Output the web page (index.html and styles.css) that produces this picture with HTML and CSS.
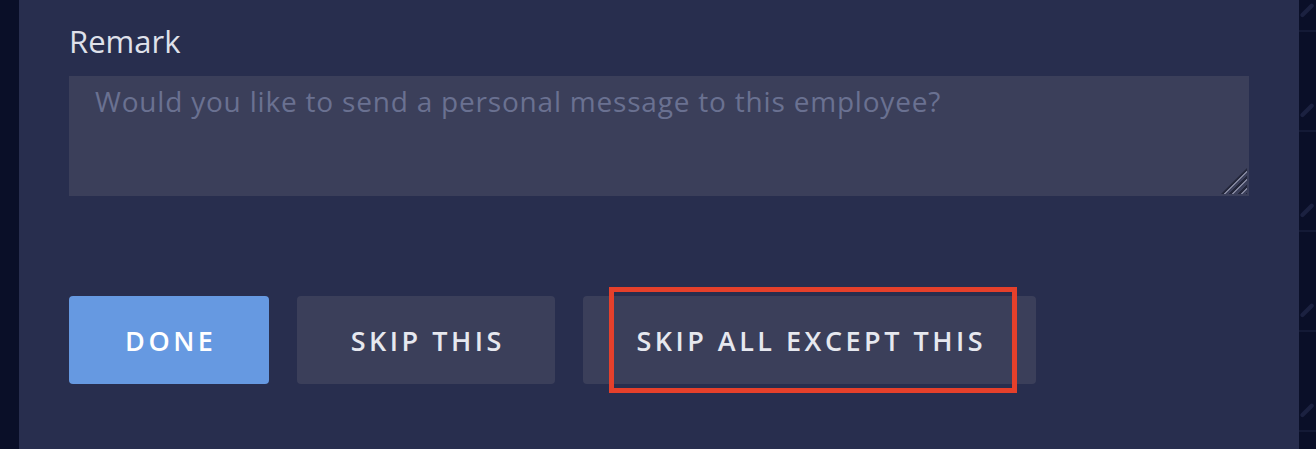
FILE: index.html
```html
<!DOCTYPE html>
<html lang="en">
<head>
<meta charset="utf-8">
<title>Remark</title>
<link rel="stylesheet" href="styles.css">
</head>
<body>
<div class="page">
  <div class="side side-left"></div>
  <div class="modal">
    <label class="label" for="remark">Remark</label>
    <div class="field">
      <textarea id="remark" class="remark" placeholder="Would you like to send a personal message to this employee?"></textarea>
      <span class="grip"></span>
    </div>
    <div class="actions">
      <button class="btn btn-primary">DONE</button>
      <button class="btn btn-secondary">SKIP THIS</button>
      <button class="btn btn-secondary btn-marked">SKIP ALL EXCEPT THIS<span class="highlight"></span></button>
    </div>
  </div>
  <div class="side side-right">
    <div class="row"><svg class="pen" viewBox="0 0 20 20"><path d="M4 16 L15 5" /></svg></div>
    <div class="row"><svg class="pen" viewBox="0 0 20 20"><path d="M4 16 L15 5" /></svg></div>
    <div class="row"><svg class="pen" viewBox="0 0 20 20"><path d="M4 16 L15 5" /></svg></div>
    <div class="row"><svg class="pen" viewBox="0 0 20 20"><path d="M4 16 L15 5" /></svg></div>
    <div class="row"><svg class="pen" viewBox="0 0 20 20"><path d="M4 16 L15 5" /></svg></div>
  </div>
</div>
</body>
</html>
```

FILE: styles.css
```css
html, body {
  margin: 0;
  padding: 0;
  height: 100%;
  background: #0b1029;
  overflow: hidden;
}

.page {
  display: flex;
  height: 449px;
  overflow: hidden;
  font-family: "Open Sans", Lato, sans-serif;
}

.side {
  background: #0a0f28;
}

.side-left {
  width: 19px;
  flex: none;
}

.side-right {
  flex: 1;
  display: flex;
  flex-direction: column;
  margin-top: -68px;
  overflow: hidden;
}

.row {
  height: 100px;
  flex: none;
  box-sizing: border-box;
  border-bottom: 2px solid #141a36;
  display: flex;
  align-items: flex-end;
  padding-bottom: 10px;
}

.pen {
  width: 20px;
  height: 20px;
}

.pen path {
  stroke: #1b2140;
  stroke-width: 5;
  stroke-linecap: round;
  fill: none;
}

.modal {
  width: 1280px;
  flex: none;
  background: #282e4e;
  box-sizing: border-box;
  padding: 20px 50px 0 50px;
  display: flex;
  flex-direction: column;
}

.label {
  display: block;
  color: #dfe1ea;
  font-size: 31px;
  line-height: 42px;
  height: 42px;
  margin-bottom: 14px;
}

.field {
  position: relative;
  width: 1180px;
  height: 120px;
}

.remark {
  display: block;
  width: 100%;
  height: 100%;
  box-sizing: border-box;
  background: #3b3f5a;
  border: none;
  border-radius: 0;
  padding: 6px 26px;
  margin: 0;
  color: #dfe1ea;
  font-family: "Open Sans", Lato, sans-serif;
  font-size: 28px;
  line-height: 38px;
  letter-spacing: 0.8px;
  outline: none;
  resize: none;
}

.remark::placeholder {
  color: #6a7191;
}

.grip {
  position: absolute;
  right: 2px;
  bottom: 2px;
  width: 26px;
  height: 26px;
  background: repeating-linear-gradient(135deg, #23263a 0 2px, #80839a 2px 3.5px, #3b3f5a 3.5px 6px);
  clip-path: polygon(100% 0, 100% 100%, 0 100%);
  pointer-events: none;
}

.actions {
  display: flex;
  gap: 28px;
  margin-top: 100px;
}

.btn {
  position: relative;
  height: 88px;
  border: none;
  border-radius: 4px;
  padding: 0 0 0 3.5px;
  font-family: "Open Sans", Lato, sans-serif;
  font-size: 27px;
  font-weight: 600;
  letter-spacing: 3.5px;
  cursor: pointer;
}

.btn-primary {
  width: 200px;
  background: #6699e1;
  color: #ffffff;
}

.btn-secondary {
  width: 258px;
  background: #3b3f5a;
  color: #e6e8ef;
}

.btn-marked {
  width: 453px;
}

.highlight {
  position: absolute;
  left: 26px;
  right: 19px;
  top: -9px;
  bottom: -9px;
  border: 5px solid #e5402b;
  pointer-events: none;
}
```
